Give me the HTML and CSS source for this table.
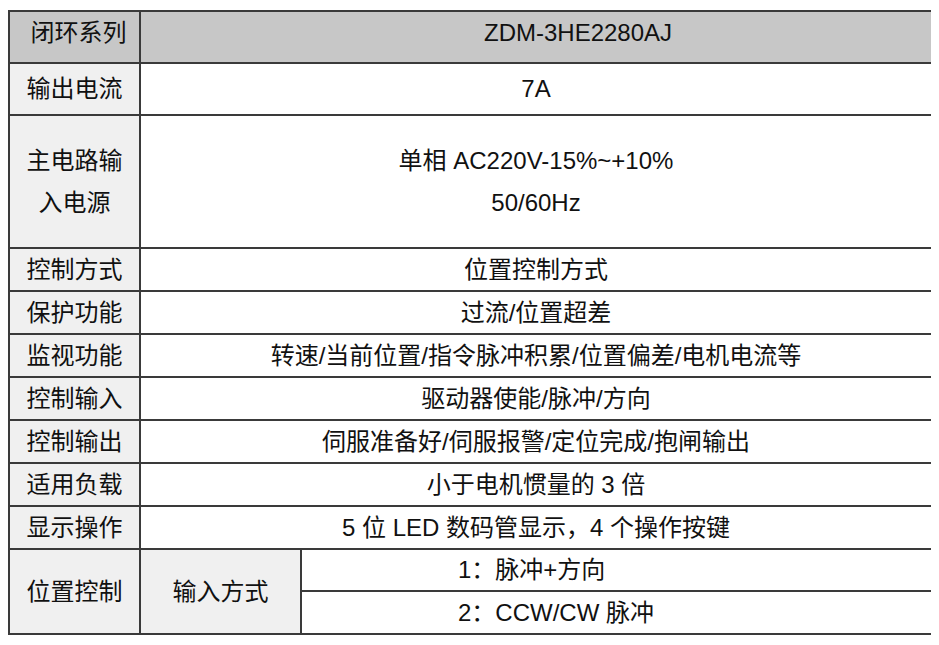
FILE: index.html
```html
<!DOCTYPE html>
<html lang="zh-CN">
<head>
<meta charset="utf-8">
<title>闭环系列参数</title>
<link rel="stylesheet" href="styles.css">
</head>
<body>
<table class="spec">
  <colgroup>
    <col class="c1">
    <col class="c2">
    <col class="c3">
  </colgroup>
  <tbody>
    <tr class="r-head">
      <td class="label head series">闭环系列</td>
      <td class="value head model" colspan="2">ZDM-3HE2280AJ</td>
    </tr>
    <tr class="r-tall">
      <td class="label">输出电流</td>
      <td class="value" colspan="2">7A</td>
    </tr>
    <tr class="r-power">
      <td class="label two">主电路输<br>入电源</td>
      <td class="value two" colspan="2">单相 AC220V-15%~+10%<br>50/60Hz</td>
    </tr>
    <tr class="r-std">
      <td class="label">控制方式</td>
      <td class="value" colspan="2">位置控制方式</td>
    </tr>
    <tr class="r-std">
      <td class="label">保护功能</td>
      <td class="value" colspan="2">过流/位置超差</td>
    </tr>
    <tr class="r-std">
      <td class="label">监视功能</td>
      <td class="value" colspan="2">转速/当前位置/指令脉冲积累/位置偏差/电机电流等</td>
    </tr>
    <tr class="r-std">
      <td class="label">控制输入</td>
      <td class="value" colspan="2">驱动器使能/脉冲/方向</td>
    </tr>
    <tr class="r-std">
      <td class="label">控制输出</td>
      <td class="value" colspan="2">伺服准备好/伺服报警/定位完成/抱闸输出</td>
    </tr>
    <tr class="r-std">
      <td class="label">适用负载</td>
      <td class="value" colspan="2">小于电机惯量的 3 倍</td>
    </tr>
    <tr class="r-std">
      <td class="label">显示操作</td>
      <td class="value" colspan="2">5 位 LED 数码管显示，4 个操作按键</td>
    </tr>
    <tr class="r-sub1">
      <td class="label" rowspan="2">位置控制</td>
      <td class="label" rowspan="2">输入方式</td>
      <td class="value opt">1：脉冲+方向</td>
    </tr>
    <tr class="r-sub2">
      <td class="value opt">2：CCW/CW 脉冲</td>
    </tr>
  </tbody>
</table>
</body>
</html>
```

FILE: styles.css
```css
html, body {
  background: #ffffff;
}
body {
  margin: 10px 8px 8px 8px;
  font-family: "Liberation Sans", "Noto Sans CJK SC", sans-serif;
  font-size: 24px;
  color: #111111;
}
.spec {
  border-collapse: collapse;
  table-layout: fixed;
  width: 923px;
}
.c1 { width: 131px; }
.c2 { width: 161px; }
.c3 { width: 631px; }
.spec td {
  border: 2px solid #3a3a3a;
  padding: 0;
  text-align: center;
  vertical-align: middle;
  line-height: 30px;
  white-space: nowrap;
}
.label {
  background: #f0f0f0;
}
.value {
  background: #ffffff;
}
.spec td.head {
  background: #c7c7c7;
  padding-bottom: 8px;
}
.spec td.series {
  padding-left: 8px;
}
.spec td.model {
  padding-left: 84px;
}
.spec td.two {
  line-height: 42px;
}
.spec td.opt {
  text-align: left;
  padding-left: 156px;
}
.r-head { height: 52px; }
.r-tall { height: 52px; }
.r-power { height: 133px; }
.r-std { height: 43px; }
.r-sub1 { height: 42px; }
.r-sub2 { height: 43px; }
```
